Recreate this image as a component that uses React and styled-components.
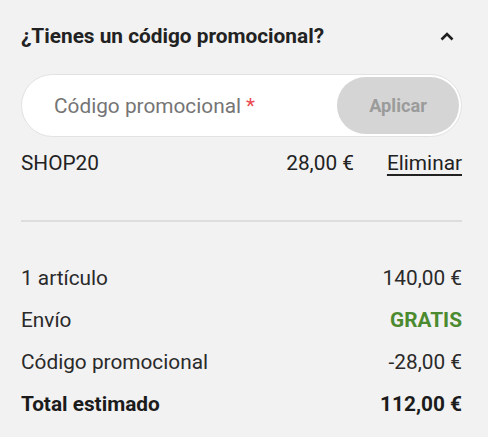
import React from 'react';
import styled, { createGlobalStyle } from 'styled-components';

const GlobalStyle = createGlobalStyle`
  html, body {
    margin: 0;
    padding: 0;
    background: #f2f2f2;
  }
  body {
    font-family: Roboto, "Liberation Sans", Arial, sans-serif;
    color: #222;
  }
`;

const Panel = styled.div`
  width: 488px;
  height: 437px;
  box-sizing: border-box;
  padding: 21px 26px 0 21px;
  display: flex;
  flex-direction: column;
`;

const Header = styled.div`
  display: flex;
  align-items: center;
  justify-content: space-between;
  height: 31px;
  margin-bottom: 22px;
`;

const Title = styled.h2`
  margin: 0;
  font-size: 20.8px;
  font-weight: 700;
  line-height: 31px;
  color: #222;
`;

const Toggle = styled.button`
  border: 0;
  background: none;
  padding: 0;
  width: 24px;
  height: 24px;
  display: flex;
  align-items: center;
  justify-content: center;
  margin-right: 3px;
  cursor: pointer;
`;

const PromoField = styled.div`
  height: 63px;
  box-sizing: border-box;
  border: 1px solid #e2e2e2;
  border-radius: 32px;
  background: #fff;
  display: flex;
  align-items: center;
  padding: 2px;
`;

const Placeholder = styled.span`
  flex: 1;
  padding-left: 30px;
  font-size: 20.8px;
  color: #757575;
`;

const Star = styled.span`
  color: #ea4a4f;
  margin-left: 5px;
`;

const ApplyButton = styled.button`
  width: 122px;
  height: 100%;
  border: 0;
  border-radius: 30px;
  background: #d5d5d5;
  color: #9b9b9b;
  font-family: inherit;
  font-size: 18.2px;
  font-weight: 700;
`;

const CodeRow = styled.div`
  display: flex;
  align-items: center;
  height: 31px;
  margin-top: 10px;
  font-size: 20.8px;
  color: #222;
`;

const CodeName = styled.span`
  flex: 1;
`;

const RemoveLink = styled.a`
  margin-left: 33px;
  color: #222;
  text-decoration: underline;
  text-decoration-thickness: 1.5px;
  text-underline-offset: 4px;
  cursor: pointer;
`;

const Divider = styled.hr`
  border: 0;
  height: 2px;
  background: #dddddd;
  margin: 42px 0 40px 0;
`;

const Summary = styled.div`
  display: flex;
  flex-direction: column;
  gap: 11px;
`;

const Line = styled.div`
  display: flex;
  justify-content: space-between;
  align-items: center;
  height: 31px;
  font-size: 20.8px;
  font-weight: ${(p) => (p.bold ? 700 : 400)};
  color: ${(p) => (p.bold ? '#1b1b1b' : '#2a2a2a')};
`;

const Value = styled.span`
  color: ${(p) => (p.green ? '#4c8a30' : 'inherit')};
  font-weight: ${(p) => (p.green ? 700 : 'inherit')};
`;

const lines = [
  { label: '1 artículo', value: '140,00 €' },
  { label: 'Envío', value: 'GRATIS', green: true },
  { label: 'Código promocional', value: '-28,00 €' },
  { label: 'Total estimado', value: '112,00 €', bold: true },
];

function App() {
  return (
    <>
      <GlobalStyle />
      <Panel>
        <Header>
          <Title>¿Tienes un código promocional?</Title>
          <Toggle aria-label="Cerrar">
            <svg width="14" height="9" viewBox="0 0 14 9">
              <polyline points="1.5,7.5 7,2 12.5,7.5" fill="none" stroke="#1e1e1e" strokeWidth="2.6" />
            </svg>
          </Toggle>
        </Header>

        <PromoField>
          <Placeholder>
            Código promocional<Star>*</Star>
          </Placeholder>
          <ApplyButton disabled>Aplicar</ApplyButton>
        </PromoField>

        <CodeRow>
          <CodeName>SHOP20</CodeName>
          <span>28,00 €</span>
          <RemoveLink>Eliminar</RemoveLink>
        </CodeRow>

        <Divider />

        <Summary>
          {lines.map((l) => (
            <Line key={l.label} bold={l.bold}>
              <span>{l.label}</span>
              <Value green={l.green}>{l.value}</Value>
            </Line>
          ))}
        </Summary>
      </Panel>
    </>
  );
}

export default App;
